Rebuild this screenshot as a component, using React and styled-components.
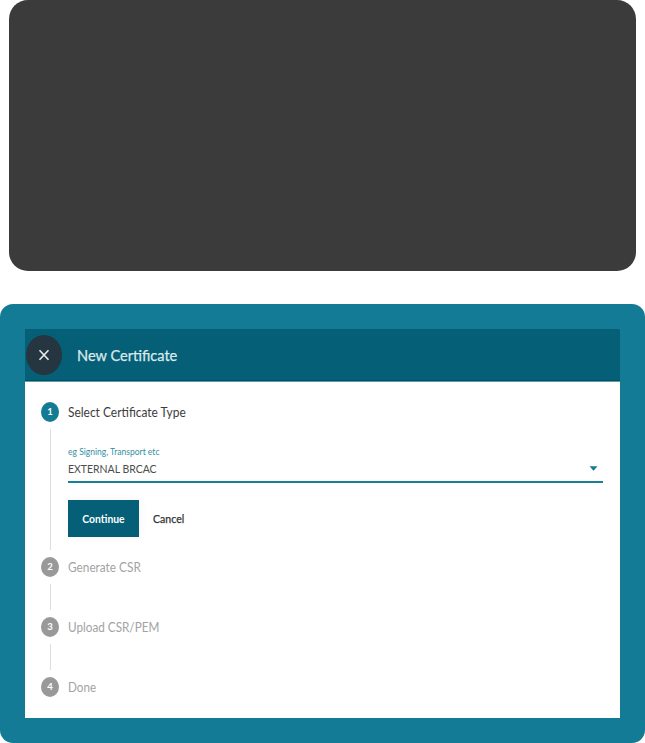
import React from "react";
import styled, { createGlobalStyle } from "styled-components";

const GlobalStyle = createGlobalStyle`
  * { box-sizing: border-box; }
  body { margin: 0; background: #fff; font-family: Lato, sans-serif; }
  button { font-family: inherit; border: 0; padding: 0; margin: 0; }
`;

const Page = styled.main`
  width: 645px;
  height: 743px;
  display: flex;
  flex-direction: column;
  gap: 33px;
  overflow: hidden;
`;

const DarkCard = styled.section`
  height: 271px;
  flex: none;
  margin: 0 9px;
  border-radius: 19px;
  background: #3b3b3b;
`;

const Frame = styled.section`
  height: 439px;
  flex: none;
  padding: 25px;
  border-radius: 13px;
  background: #147b97;
`;

const Dialog = styled.div`
  height: 389px;
  background: #fff;
  border-top-right-radius: 2px;
`;

const Header = styled.header`
  height: 53px;
  display: flex;
  align-items: center;
  padding: 0 0 1px 1px;
  gap: 15px;
  background: #055f76;
  border-bottom: 1px solid #5e9bab;
  border-top-right-radius: 1px;
  box-shadow: inset 0 -1px 0 #044e65;
`;

const CloseButton = styled.button`
  width: 36px;
  height: 40px;
  display: grid;
  place-items: center;
  border-radius: 50%;
  background: #263640;
`;

/* Slightly condensed type; $scale sets the horizontal proportion. */
const Text = styled.span`
  display: block;
  margin: 0;
  white-space: nowrap;
  font-size: ${(p) => p.$size}px;
  font-weight: ${(p) => p.$weight || 400};
  line-height: ${(p) => p.$line || 20}px;
  color: ${(p) => p.$color};
  transform: scaleX(${(p) => p.$scale || 1});
  transform-origin: ${(p) => p.$origin || "left"};
`;

const Title = styled(Text)`
  -webkit-text-stroke: 0.25px currentColor;
`;

const StepLabel = styled(Text)`
  padding-top: 2px;
`;

const Stepper = styled.div`
  padding: 20px 17px 0 16px;
`;

const StepHead = styled.div`
  height: 20px;
  display: flex;
  align-items: center;
  gap: 9px;
`;

const Badge = styled.span`
  width: 18px;
  height: 20px;
  border-radius: 50%;
  text-align: center;
  font-size: 9.5px;
  font-weight: 700;
  line-height: 20px;
  color: #fff;
  background: ${(p) => (p.$active ? "#147b94" : "#999")};
`;

const StepBody = styled.div`
  height: ${(p) => p.$height}px;
  display: flex;
  padding: 7px 0 7px 9px;
`;

const Connector = styled.div`
  width: 1px;
  flex: none;
  background: #dedede;
`;

const Form = styled.div`
  flex: 1;
  margin-left: 17px;
  padding-top: 16px;
`;

const Select = styled.div`
  height: 38px;
  border-bottom: 2px solid #188197;
`;

const SelectValue = styled.div`
  display: flex;
  align-items: center;
  justify-content: space-between;
  height: 19px;
  padding-right: 5px;
`;

const Actions = styled.div`
  display: flex;
  gap: 14px;
  margin-top: 17px;
`;

const Continue = styled.button`
  width: 71px;
  height: 37px;
  display: grid;
  place-items: center;
  background: #055f76;
  box-shadow: 1px -1px 10px rgba(0, 0, 0, 0.045);
`;

const Cancel = styled.button`
  height: 37px;
  background: transparent;
`;

const steps = [
  { label: "Generate CSR", scale: 0.945, gap: 40 },
  { label: "Upload CSR/PEM", scale: 0.938, gap: 40 },
  { label: "Done", scale: 0.935 },
];

export default function App() {
  return (
    <Page>
      <GlobalStyle />
      <DarkCard />
      <Frame>
        <Dialog>
          <Header>
            <CloseButton aria-label="Close">
              <svg width="36" height="40" viewBox="0 0 36 40">
                <path d="M13.5 15.2 22.5 24.8M22.5 15.2 13.5 24.8" stroke="#e8edef" strokeWidth="1.6" fill="none" />
              </svg>
            </CloseButton>
            <Title as="h1" $size={15.5} $color="#dce9ed" $scale={0.94}>New Certificate</Title>
          </Header>
          <Stepper>
            <StepHead>
              <Badge $active>1</Badge>
              <StepLabel $size={12.5} $color="#3c3c3c" $scale={0.957}>Select Certificate Type</StepLabel>
            </StepHead>
            <StepBody $height={135}>
              <Connector />
              <Form>
                <Select>
                  <Text $size={9} $line={14} $color="#35909f" $scale={0.948}>eg Signing, Transport etc</Text>
                  <SelectValue>
                    <Text $size={12} $color="#4d4d4d" $scale={0.872}>EXTERNAL BRCAC</Text>
                    <svg width="9" height="5" viewBox="0 0 9 5">
                      <path d="M.5.3h8L4.5 4.8Z" fill="#147b94" />
                    </svg>
                  </SelectValue>
                </Select>
                <Actions>
                  <Continue>
                    <Text $size={11} $weight={700} $color="#fff" $scale={0.94} $origin="center">Continue</Text>
                  </Continue>
                  <Cancel>
                    <Title $size={11} $color="#333" $scale={0.96}>Cancel</Title>
                  </Cancel>
                </Actions>
              </Form>
            </StepBody>
            {steps.map((step, i) => (
              <React.Fragment key={step.label}>
                <StepHead>
                  <Badge>{i + 2}</Badge>
                  <StepLabel $size={12.5} $color="#a3a3a3" $scale={step.scale}>{step.label}</StepLabel>
                </StepHead>
                {step.gap && (
                  <StepBody $height={step.gap}>
                    <Connector />
                  </StepBody>
                )}
              </React.Fragment>
            ))}
          </Stepper>
        </Dialog>
      </Frame>
    </Page>
  );
}
